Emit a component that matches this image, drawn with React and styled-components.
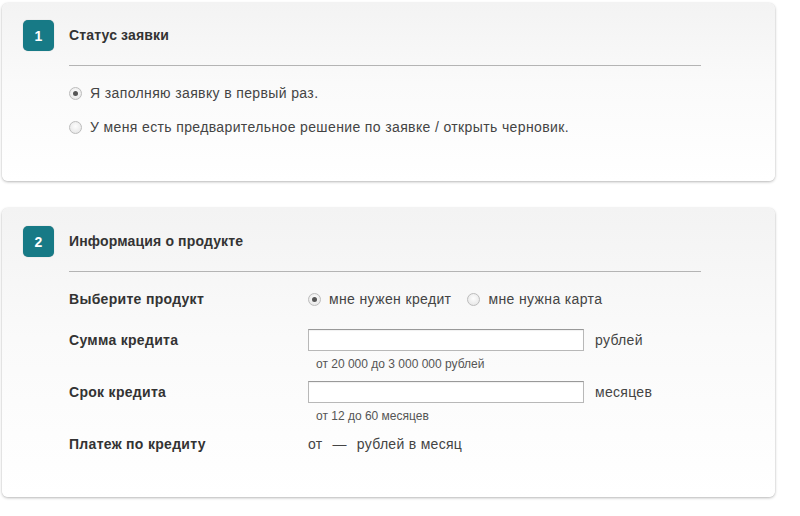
import styled, { createGlobalStyle } from "styled-components";

const GlobalStyle = createGlobalStyle`
    body {
        margin: 0;
        background: #fff;
        font-family: "Liberation Sans", Arial, sans-serif;
        color: #333;
    }
`;

const Page = styled.div`
    width: 800px;
    height: 516px;
    padding: 3px 0 0 2px;
    box-sizing: border-box;
    display: flex;
    flex-direction: column;
    gap: 27px;
    overflow: hidden;
`;

const Card = styled.div`
    width: 773px;
    box-sizing: border-box;
    height: ${p => p.h}px;
    padding: ${p => p.top}px 74px 0 21px;
    border-radius: 6px;
    background: linear-gradient(180deg, #f3f3f3 0%, #fafafa 45%, #fff 100%);
    box-shadow: 0 1px 3px rgba(0, 0, 0, 0.28), 0 0 1px rgba(0, 0, 0, 0.12);
    display: grid;
    grid-template-columns: 31px 1fr;
    column-gap: 15px;
    align-content: start;
`;

const Badge = styled.div`
    width: 31px;
    height: 31px;
    border-radius: 5px;
    background: #177a86;
    color: #fff;
    font-weight: bold;
    font-size: 14px;
    display: flex;
    align-items: center;
    justify-content: center;
    box-shadow: 0 0 1px rgba(0,0,0,0.3);
`;

const Body = styled.div``;

const Title = styled.div`
    height: 31px;
    display: flex;
    align-items: center;
    font-size: 14px;
    font-weight: bold;
    color: #333;
    letter-spacing: 0.15px;
    border-bottom: 1px solid #b4b4b4;
    box-sizing: content-box;
    padding-bottom: 15px;
    margin-top: -1px;
`;

const RadioList = styled.div`
    display: flex;
    flex-direction: column;
    gap: 14px;
    margin-top: 17px;
`;

const RadioLabel = styled.label`
    display: inline-flex;
    align-items: center;
    gap: 8px;
    height: 20px;
    font-size: 14px;
    letter-spacing: 0.37px;
    color: #444;
    margin-left: ${p => p.ml || 0}px;
`;

const RadioDot = styled.span`
    width: 11px;
    height: 11px;
    border-radius: 50%;
    border: 1px solid #bcbcbc;
    background: radial-gradient(circle at 50% 40%, #fdfdfd 0%, #e2e2e2 100%);
    display: inline-flex;
    align-items: center;
    justify-content: center;
    flex-shrink: 0;
    &::after {
        content: "";
        width: 5px;
        height: 5px;
        border-radius: 50%;
        background: ${p => (p.checked ? "#555" : "transparent")};
    }
`;

const Form = styled.div`
    margin-top: 17px;
`;

const Row = styled.div`
    display: flex;
    align-items: flex-start;
    margin-top: ${p => p.mt || 0}px;
`;

const Label = styled.div`
    width: 239px;
    flex-shrink: 0;
    font-size: 14px;
    font-weight: bold;
    letter-spacing: 0.3px;
    color: #333;
    line-height: ${p => p.lh || 22}px;
`;

const Field = styled.div`
    display: flex;
    flex-direction: column;
`;

const InputLine = styled.div`
    display: flex;
    align-items: center;
    gap: 11px;
`;

const Input = styled.input`
    width: 276px;
    height: 22px;
    box-sizing: border-box;
    border: 1px solid #b8b8b8;
    border-top-color: #999;
    background: #fff;
    margin: 0;
    padding: 0 4px;
    box-shadow: inset 0 1px 1px rgba(0,0,0,0.06);
`;

const Unit = styled.span`
    font-size: 14px;
    letter-spacing: 0.3px;
    color: #444;
`;

const Hint = styled.div`
    font-size: 12px;
    color: #555;
    margin: 6px 0 0 8px;
    line-height: 14px;
`;

const Value = styled.div`
    font-size: 14px;
    letter-spacing: 0.3px;
    color: #444;
    line-height: 22px;
`;

const Dash = styled.span`
    margin: 0 10px;
`;

export default function App() {
    return (
        <>
            <GlobalStyle />
            <Page>
                <Card h={178} top={17}>
                    <Badge>1</Badge>
                    <Body>
                        <Title>Статус заявки</Title>
                        <RadioList>
                            <RadioLabel>
                                <RadioDot checked />
                                Я заполняю заявку в первый раз.
                            </RadioLabel>
                            <RadioLabel>
                                <RadioDot />
                                У меня есть предварительное решение по заявке / открыть черновик.
                            </RadioLabel>
                        </RadioList>
                    </Body>
                </Card>
                <Card h={289} top={18}>
                    <Badge>2</Badge>
                    <Body>
                        <Title>Информация о продукте</Title>
                        <Form>
                            <Row>
                                <Label lh={20}>Выберите продукт</Label>
                                <RadioLabel>
                                    <RadioDot checked />
                                    мне нужен кредит
                                </RadioLabel>
                                <RadioLabel ml={16}>
                                    <RadioDot />
                                    мне нужна карта
                                </RadioLabel>
                            </Row>
                            <Row mt={20}>
                                <Label>Сумма кредита</Label>
                                <Field>
                                    <InputLine>
                                        <Input />
                                        <Unit>рублей</Unit>
                                    </InputLine>
                                    <Hint>от 20 000 до 3 000 000 рублей</Hint>
                                </Field>
                            </Row>
                            <Row mt={10}>
                                <Label>Срок кредита</Label>
                                <Field>
                                    <InputLine>
                                        <Input />
                                        <Unit>месяцев</Unit>
                                    </InputLine>
                                    <Hint>от 12 до 60 месяцев</Hint>
                                </Field>
                            </Row>
                            <Row mt={10}>
                                <Label>Платеж по кредиту</Label>
                                <Value>
                                    от<Dash>—</Dash>рублей в месяц
                                </Value>
                            </Row>
                        </Form>
                    </Body>
                </Card>
            </Page>
        </>
    );
}
